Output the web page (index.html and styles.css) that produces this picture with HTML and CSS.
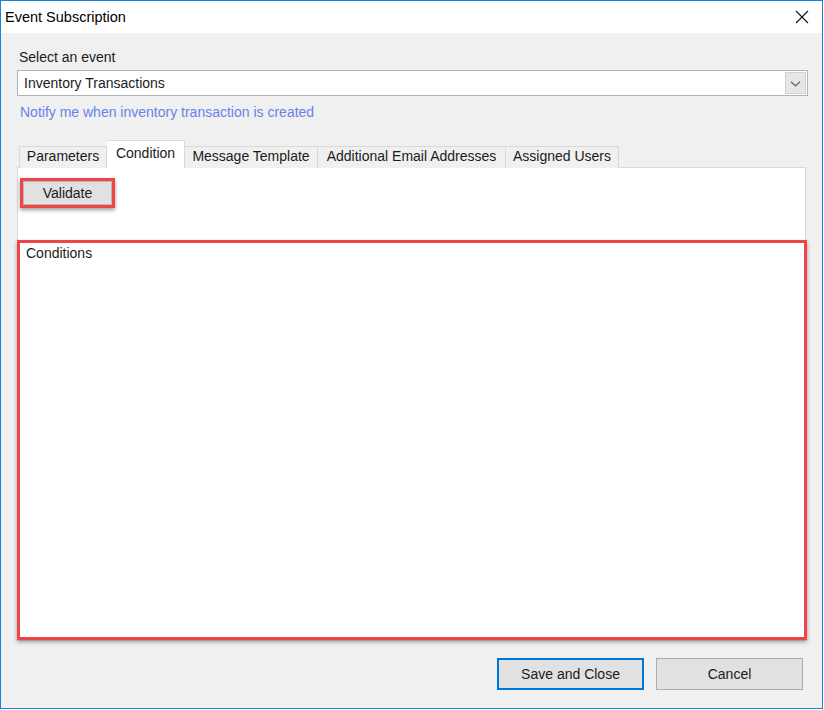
FILE: index.html
```html
<!DOCTYPE html>
<html>
<head>
<meta charset="utf-8">
<title>Event Subscription</title>
<link rel="stylesheet" href="styles.css">
</head>
<body>
<div class="window">
  <div class="titlebar">
    <span class="title">Event Subscription</span>
    <svg class="close" width="14" height="14" viewBox="0 0 14 14"><path d="M1 1 L13 13 M13 1 L1 13" stroke="#111" stroke-width="1.1" fill="none"/></svg>
  </div>
  <div class="content">
    <div class="field-label">Select an event</div>
    <div class="combo">
      <span class="combo-text">Inventory Transactions</span>
      <span class="combo-drop"><svg width="11" height="6" viewBox="0 0 11 6"><path d="M1 0.8 L5.5 5 L10 0.8" stroke="#606060" stroke-width="1.2" fill="none"/></svg></span>
    </div>
    <div class="link">Notify me when inventory transaction is created</div>
    <div class="tabs">
      <div class="tab tab-params">Parameters</div>
      <div class="tab tab-condition active">Condition</div>
      <div class="tab tab-message">Message Template</div>
      <div class="tab tab-emails">Additional Email Addresses</div>
      <div class="tab tab-users">Assigned Users</div>
    </div>
    <div class="panel">
      <div class="validate-highlight"><div class="btn-validate">Validate</div></div>
      <div class="conditions"><span class="conditions-label">Conditions</span></div>
    </div>
    <div class="footer">
      <div class="btn btn-primary">Save and Close</div>
      <div class="btn">Cancel</div>
    </div>
  </div>
</div>
</body>
</html>
```

FILE: styles.css
```css
* { box-sizing: border-box; }
html, body { margin: 0; padding: 0; background: #ffffff; }
body {
  font-family: "Liberation Sans", Arial, sans-serif;
  font-size: 14px;
  color: #1b1b1b;
}
.window {
  width: 823px;
  height: 709px;
  border: 1px solid #1883d7;
  display: flex;
  flex-direction: column;
  background: #f0f0f0;
}
.titlebar {
  height: 32px;
  background: #ffffff;
  display: flex;
  align-items: center;
  justify-content: space-between;
  padding: 0 13px 0 4px;
  flex: none;
}
.title {
  font-size: 14.5px;
  color: #000;
  line-height: 17px;
  padding-top: 1px;
}
.close { display: block; }
.content {
  flex: 1;
  display: flex;
  flex-direction: column;
  padding: 16px 16px 18px 16px;
  min-height: 0;
}
.field-label {
  line-height: 17px;
  padding-left: 2px;
}
.combo {
  margin-top: 4px;
  height: 26px;
  margin-right: -2px;
  border: 1px solid #b4b4b4;
  background: #ffffff;
  display: flex;
  align-items: center;
  justify-content: space-between;
  padding: 0 1px 0 6px;
}
.combo-text { line-height: 24px; }
.combo-drop {
  width: 21px;
  height: 22px;
  background: #e6e6e6;
  border: 1px solid #d2d2d2;
  display: flex;
  align-items: center;
  justify-content: center;
}
.combo-drop svg { display: block; margin-top: 1px; }
.link {
  margin-top: 8px;
  line-height: 17px;
  color: #6a7fee;
  padding-left: 3px;
}
.tabs {
  margin-top: 20px;
  height: 27px;
  display: flex;
  align-items: flex-end;
  padding-left: 2px;
  position: relative;
  z-index: 1;
  margin-bottom: -1px;
}
.tab {
  height: 22px;
  border: 1px solid #d9d9d9;
  border-bottom: none;
  border-left: none;
  background: #f0f0f0;
  padding-top: 1px;
  line-height: 17px;
  text-align: center;
  white-space: nowrap;
}
.tab-params { width: 88px; border-left: 1px solid #d9d9d9; }
.tab-condition { width: 78px; }
.tab-message { width: 133px; }
.tab-emails { width: 188px; }
.tab-users { width: 113px; }
.tab.active {
  height: 28px;
  background: #ffffff;
  padding-top: 4px;
  border-left: none;
}
.panel {
  flex: 1;
  background: #ffffff;
  border: 1px solid #d9d9d9;
  display: flex;
  flex-direction: column;
  min-height: 0;
}
.validate-highlight {
  margin: 10px 0 0 2px;
  width: 95px;
  height: 30px;
  border: 3px solid #ee4646;
  box-shadow: 0 2px 4px rgba(0, 0, 0, 0.4);
  flex: none;
}
.btn-validate {
  height: 100%;
  background: #e1e1e1;
  border: 1px solid #b9b9b9;
  text-align: center;
  line-height: 22px;
}
.conditions {
  flex: 1;
  margin: 32px -2px 0 -1px;
  border: 3px solid #ee4646;
  box-shadow: 0 2px 4px rgba(0, 0, 0, 0.35);
  padding: 2px 0 0 6px;
}
.conditions-label { line-height: 17px; }
.footer {
  margin-top: 17px;
  display: flex;
  justify-content: flex-end;
  gap: 12px;
  padding-right: 3px;
  flex: none;
}
.btn {
  width: 147px;
  height: 32px;
  background: #e1e1e1;
  border: 1px solid #adadad;
  display: flex;
  align-items: center;
  justify-content: center;
}
.btn-primary {
  border: 2px solid #0078d7;
}
```
